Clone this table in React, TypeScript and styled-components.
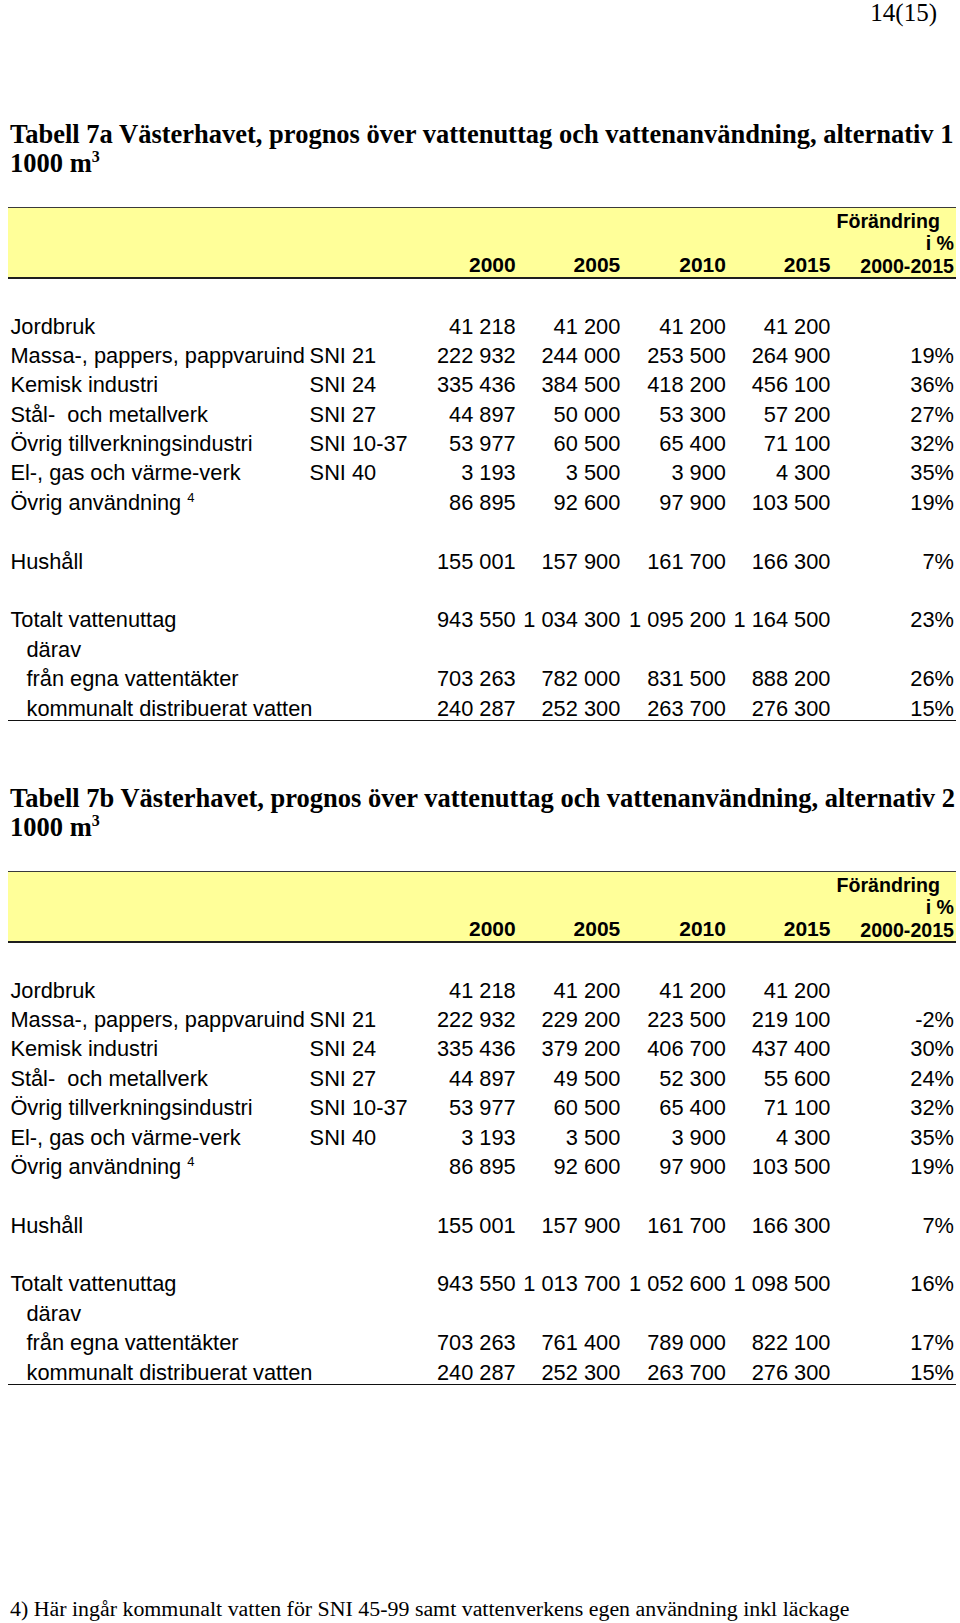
import React from "react";
import styled, { createGlobalStyle } from "styled-components";

const Global = createGlobalStyle`
  html, body { margin: 0; padding: 0; background: #fff; }
  body { width: 960px; color: #000; }
`;

const Page = styled.div`
  width: 960px;
  min-height: 1623px;
  box-sizing: border-box;
  display: flex;
  flex-direction: column;
`;

const PageNumber = styled.div`
  font-family: "Liberation Serif", "Times New Roman", serif;
  font-size: 25px;
  line-height: 26px;
  text-align: right;
  padding-right: 23px;
`;

const Section = styled.section<{ $top: number }>`
  margin-top: ${(p) => p.$top}px;
  display: flex;
  flex-direction: column;
`;

const Title = styled.h2`
  margin: 0 0 0 10px;
  font-family: "Liberation Serif", "Times New Roman", serif;
  font-weight: bold;
  font-size: 26.5px;
  line-height: 29px;
  white-space: nowrap;
`;

const TitleLine = styled.div``;

const Sup = styled.sup<{ $size: number; $rise: number }>`
  font-size: ${(p) => p.$size}px;
  vertical-align: ${(p) => p.$rise}px;
  line-height: 0;
`;

const Table = styled.div`
  margin: 29px 0 0 8px;
  width: 948px;
  display: flex;
  flex-direction: column;
  font-family: "Liberation Sans", Arial, sans-serif;
`;

const cols = "301.6px 101.6px 104.5px 104.6px 105.7px 104.5px 125.5px";

const HeaderRow = styled.div`
  display: grid;
  grid-template-columns: ${cols};
  align-items: end;
  background: #ffff99;
  border-top: 1px solid #3a3a3a;
  border-bottom: 2px solid #1e1e1e;
  height: 69px;
  box-sizing: content-box;
  font-weight: bold;
  font-size: 21px;
  line-height: 22px;
`;

const HeadCell = styled.div`
  text-align: right;
  padding-bottom: 1px;
`;

const PctHead = styled.div`
  display: flex;
  flex-direction: column;
  align-items: flex-end;
  padding-right: 2px;
  font-size: 19.6px;
  line-height: 22.5px;
`;

const PctLine = styled.div<{ $pad?: number }>`
  padding-right: ${(p) => p.$pad ?? 0}px;
  white-space: nowrap;
`;

const Body = styled.div`
  margin-top: 32.5px;
  display: flex;
  flex-direction: column;
  border-bottom: 1px solid #111;
`;

const Row = styled.div<{ $last?: boolean }>`
  display: grid;
  grid-template-columns: ${cols};
  height: ${(p) => (p.$last ? 26.5 : 29.4)}px;
  font-size: 21.8px;
  line-height: 29.4px;
  white-space: pre;
`;

const Label = styled.div<{ $indent?: boolean }>`
  padding-left: ${(p) => (p.$indent ? 18.5 : 2.4)}px;
`;

const Sni = styled.div``;

const Num = styled.div`
  text-align: right;
`;

const Pct = styled.div`
  text-align: right;
  padding-right: 2px;
`;

const Footnote = styled.div`
  margin-top: auto;
  padding: 0 0 2px 10px;
  font-family: "Liberation Serif", "Times New Roman", serif;
  font-size: 21.9px;
  line-height: 24px;
  white-space: nowrap;
`;

type R = {
  label?: string;
  sup?: string;
  sni?: string;
  v?: string[];
  p?: string;
  indent?: boolean;
};

const table1: R[] = [
  { label: "Jordbruk", v: ["41 218", "41 200", "41 200", "41 200"] },
  { label: "Massa-, pappers, pappvaruind", sni: "SNI 21", v: ["222 932", "244 000", "253 500", "264 900"], p: "19%" },
  { label: "Kemisk industri", sni: "SNI 24", v: ["335 436", "384 500", "418 200", "456 100"], p: "36%" },
  { label: "Stål-  och metallverk", sni: "SNI 27", v: ["44 897", "50 000", "53 300", "57 200"], p: "27%" },
  { label: "Övrig tillverkningsindustri", sni: "SNI 10-37", v: ["53 977", "60 500", "65 400", "71 100"], p: "32%" },
  { label: "El-, gas och värme-verk", sni: "SNI 40", v: ["3 193", "3 500", "3 900", "4 300"], p: "35%" },
  { label: "Övrig användning ", sup: "4", v: ["86 895", "92 600", "97 900", "103 500"], p: "19%" },
  {},
  { label: "Hushåll", v: ["155 001", "157 900", "161 700", "166 300"], p: "7%" },
  {},
  { label: "Totalt vattenuttag", v: ["943 550", "1 034 300", "1 095 200", "1 164 500"], p: "23%" },
  { label: "därav", indent: true },
  { label: "från egna vattentäkter", indent: true, v: ["703 263", "782 000", "831 500", "888 200"], p: "26%" },
  { label: "kommunalt distribuerat vatten", indent: true, v: ["240 287", "252 300", "263 700", "276 300"], p: "15%" },
];

const table2: R[] = [
  { label: "Jordbruk", v: ["41 218", "41 200", "41 200", "41 200"] },
  { label: "Massa-, pappers, pappvaruind", sni: "SNI 21", v: ["222 932", "229 200", "223 500", "219 100"], p: "-2%" },
  { label: "Kemisk industri", sni: "SNI 24", v: ["335 436", "379 200", "406 700", "437 400"], p: "30%" },
  { label: "Stål-  och metallverk", sni: "SNI 27", v: ["44 897", "49 500", "52 300", "55 600"], p: "24%" },
  { label: "Övrig tillverkningsindustri", sni: "SNI 10-37", v: ["53 977", "60 500", "65 400", "71 100"], p: "32%" },
  { label: "El-, gas och värme-verk", sni: "SNI 40", v: ["3 193", "3 500", "3 900", "4 300"], p: "35%" },
  { label: "Övrig användning ", sup: "4", v: ["86 895", "92 600", "97 900", "103 500"], p: "19%" },
  {},
  { label: "Hushåll", v: ["155 001", "157 900", "161 700", "166 300"], p: "7%" },
  {},
  { label: "Totalt vattenuttag", v: ["943 550", "1 013 700", "1 052 600", "1 098 500"], p: "16%" },
  { label: "därav", indent: true },
  { label: "från egna vattentäkter", indent: true, v: ["703 263", "761 400", "789 000", "822 100"], p: "17%" },
  { label: "kommunalt distribuerat vatten", indent: true, v: ["240 287", "252 300", "263 700", "276 300"], p: "15%" },
];

const years = ["2000", "2005", "2010", "2015"];

function DataTable({ title, rows, top }: { title: string; rows: R[]; top: number }) {
  return (
    <Section $top={top}>
      <Title>
        <TitleLine>{title}</TitleLine>
        <TitleLine>
          1000 m<Sup $size={16} $rise={10}>3</Sup>
        </TitleLine>
      </Title>
      <Table>
        <HeaderRow>
          <div />
          <div />
          {years.map((y) => (
            <HeadCell key={y}>{y}</HeadCell>
          ))}
          <PctHead>
            <PctLine $pad={14}>Förändring</PctLine>
            <PctLine>i %</PctLine>
            <PctLine>2000-2015</PctLine>
          </PctHead>
        </HeaderRow>
        <Body>
          {rows.map((r, i) => (
            <Row key={i} $last={i === rows.length - 1}>
              <Label $indent={r.indent}>
                {r.label}
                {r.sup && (
                  <Sup $size={13} $rise={8}>
                    {r.sup}
                  </Sup>
                )}
              </Label>
              <Sni>{r.sni}</Sni>
              {[0, 1, 2, 3].map((k) => (
                <Num key={k}>{r.v ? r.v[k] : ""}</Num>
              ))}
              <Pct>{r.p}</Pct>
            </Row>
          ))}
        </Body>
      </Table>
    </Section>
  );
}

export default function App() {
  return (
    <>
      <Global />
      <Page>
        <PageNumber>14(15)</PageNumber>
        <DataTable
          top={94}
          title="Tabell 7a Västerhavet, prognos över vattenuttag och vattenanvändning, alternativ 1"
          rows={table1}
        />
        <DataTable
          top={63}
          title="Tabell 7b Västerhavet, prognos över vattenuttag och vattenanvändning, alternativ 2"
          rows={table2}
        />
        <Footnote>
          4) Här ingår kommunalt vatten för SNI 45-99 samt vattenverkens egen användning inkl läckage
        </Footnote>
      </Page>
    </>
  );
}
